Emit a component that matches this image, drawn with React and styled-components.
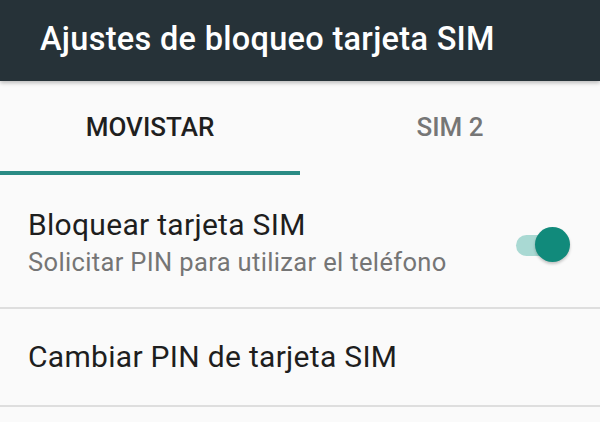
import React, { useState } from 'react'
import styled, { createGlobalStyle } from 'styled-components'

const GlobalStyle = createGlobalStyle`
  html, body {
    margin: 0;
    padding: 0;
    background: #fafafa;
    font-family: Roboto, "Noto Sans", sans-serif;
  }
`

const Screen = styled.div`
  width: 600px;
  height: 422px;
  overflow: hidden;
  background: #fafafa;
`

const Toolbar = styled.header`
  height: 81px;
  background: #263238;
  display: flex;
  align-items: center;
  padding-left: 40px;
  box-shadow: 0 2px 4px rgba(0, 0, 0, 0.25);
  position: relative;
  z-index: 1;
`

const Title = styled.h1`
  margin: 0;
  padding-bottom: 4px;
  color: #ffffff;
  font-size: 32.5px;
  font-weight: 500;
  letter-spacing: 0.3px;
`

const Tabs = styled.nav`
  display: flex;
  height: 94px;
`

const Tab = styled.div`
  flex: 1;
  display: flex;
  align-items: center;
  justify-content: center;
  padding-top: 2px;
  font-size: 26px;
  font-weight: 500;
  color: ${props => (props.active ? '#1f1f1f' : '#767676')};
  border-bottom: 4px solid ${props => (props.active ? '#2a8b84' : 'transparent')};
`

const Row = styled.div`
  height: ${props => props.height}px;
  display: flex;
  align-items: center;
  justify-content: space-between;
  padding: 0 30px 0 28px;
  border-bottom: 2px solid #dedede;
  box-sizing: border-box;
`

const Texts = styled.div`
  display: flex;
  flex-direction: column;
  gap: 5px;
  padding-top: 3px;
`

const Primary = styled.div`
  font-size: 30px;
  letter-spacing: 0.3px;
  color: #1e1e1e;
  line-height: 34px;
`

const Secondary = styled.div`
  font-size: 25.5px;
  letter-spacing: 0.35px;
  color: #757575;
  line-height: 30px;
`

const Switch = styled.button`
  position: relative;
  width: 54px;
  height: 36px;
  border: none;
  padding: 0;
  background: transparent;
  cursor: pointer;
  margin-top: 8px;
`

const Track = styled.span`
  position: absolute;
  left: 0;
  top: 8px;
  width: 50px;
  height: 21px;
  border-radius: 11px;
  background: ${props => (props.on ? '#a9d9d3' : '#c7c7c7')};
`

const Thumb = styled.span`
  position: absolute;
  top: 0;
  left: ${props => (props.on ? '19px' : '0')};
  width: 35px;
  height: 35px;
  border-radius: 50%;
  background: ${props => (props.on ? '#118a7b' : '#f1f1f1')};
  box-shadow: 0 2px 3px rgba(0, 0, 0, 0.22);
`

const App = () => {
  const [locked, setLocked] = useState(true)

  return (
    <Screen>
      <GlobalStyle />
      <Toolbar>
        <Title>Ajustes de bloqueo tarjeta SIM</Title>
      </Toolbar>
      <Tabs>
        <Tab active>MOVISTAR</Tab>
        <Tab>SIM 2</Tab>
      </Tabs>
      <Row height={134}>
        <Texts>
          <Primary>Bloquear tarjeta SIM</Primary>
          <Secondary>Solicitar PIN para utilizar el teléfono</Secondary>
        </Texts>
        <Switch onClick={() => setLocked(!locked)}>
          <Track on={locked} />
          <Thumb on={locked} />
        </Switch>
      </Row>
      <Row height={98}>
        <Primary>Cambiar PIN de tarjeta SIM</Primary>
      </Row>
    </Screen>
  )
}

export default App
